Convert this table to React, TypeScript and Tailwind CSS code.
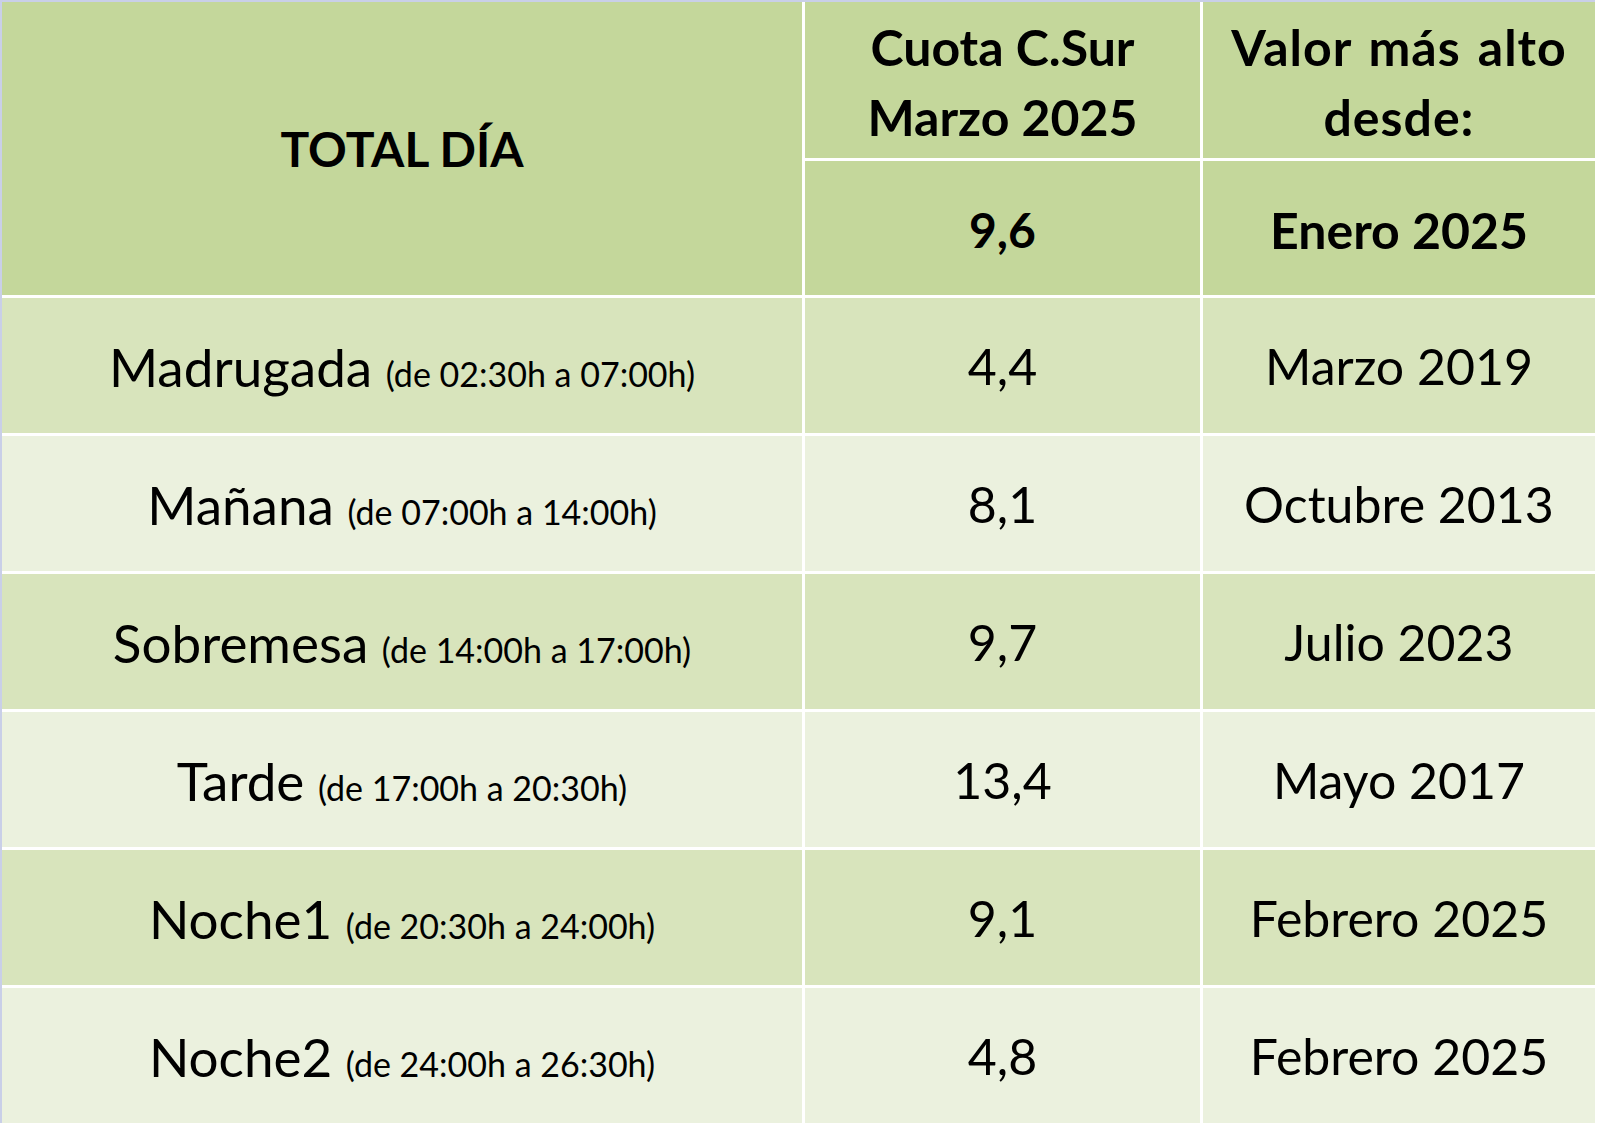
import React from "react";

const rows = [
  { name: "Madrugada", range: "(de 02:30h a 07:00h)", value: "4,4", since: "Marzo 2019", bg: "bg-[#d8e4bc]" },
  { name: "Mañana", range: "(de 07:00h a 14:00h)", value: "8,1", since: "Octubre 2013", bg: "bg-[#ebf1de]" },
  { name: "Sobremesa", range: "(de 14:00h a 17:00h)", value: "9,7", since: "Julio 2023", bg: "bg-[#d8e4bc]" },
  { name: "Tarde", range: "(de 17:00h a 20:30h)", value: "13,4", since: "Mayo 2017", bg: "bg-[#ebf1de]" },
  { name: "Noche1", range: "(de 20:30h a 24:00h)", value: "9,1", since: "Febrero 2025", bg: "bg-[#d8e4bc]" },
  { name: "Noche2", range: "(de 24:00h a 26:30h)", value: "4,8", since: "Febrero 2025", bg: "bg-[#ebf1de]" },
];

export default function App() {
  return (
    <div
      className="w-[1600px] h-[1126px] bg-white overflow-hidden text-black"
      style={{ fontFamily: "Lato, 'Open Sans', sans-serif" }}
    >
      <div className="w-[1595px] border-l-2 border-t-2 border-[#c9cfe8] bg-white">
        <div className="grid grid-cols-[800px_395px_392px] grid-rows-[156px_134px_repeat(6,135px)] gap-[3px]">
          <div className="row-span-2 bg-[#c4d79b] flex items-center justify-center font-bold text-[48px]">
            TOTAL DÍA
          </div>
          <div className="bg-[#c4d79b] flex flex-col items-center justify-center font-bold text-[50px] leading-[70px] pt-[4px]">
            <span>Cuota C.Sur</span>
            <span>Marzo 2025</span>
          </div>
          <div className="bg-[#c4d79b] flex flex-col items-center justify-center font-bold text-[50px] leading-[70px] pt-[4px]">
            <span className="tracking-[1px] [word-spacing:4px]">Valor más alto</span>
            <span className="tracking-[1px]">desde:</span>
          </div>
          <div className="bg-[#c4d79b] flex items-center justify-center font-bold text-[48px] pt-[4px]">9,6</div>
          <div className="bg-[#c4d79b] flex items-center justify-center font-bold text-[50px] pt-[4px]">Enero 2025</div>
          {rows.map((r) => (
            <React.Fragment key={r.name}>
              <div className={`${r.bg} flex items-center justify-center pt-[2px]`}>
                <span className="text-[53px] leading-none">
                  {r.name} <span className="text-[34px]">{r.range}</span>
                </span>
              </div>
              <div className={`${r.bg} flex items-center justify-center text-[50px] pt-[2px]`}>{r.value}</div>
              <div className={`${r.bg} flex items-center justify-center text-[50px] pt-[2px]`}>{r.since}</div>
            </React.Fragment>
          ))}
        </div>
      </div>
    </div>
  );
}
